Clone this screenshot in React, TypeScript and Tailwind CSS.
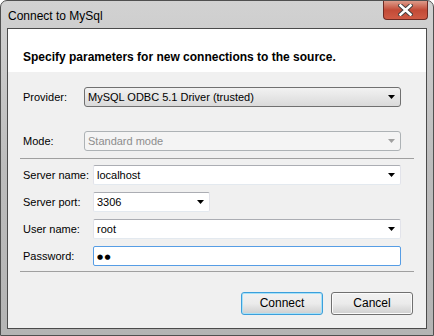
import React from "react";

const Arrow = ({ disabled }: { disabled?: boolean }) => (
  <svg width="7" height="4" viewBox="0 0 7 4" className="shrink-0">
    <polygon points="0,0 7,0 3.5,4" fill={disabled ? "#a0a0a0" : "#000"} />
  </svg>
);

const Combo = ({ text, disabled }: { text: string; disabled?: boolean }) => (
  <div
    className={
      "flex-1 h-[20px] rounded-[3px] border flex items-center pl-[3px] pr-[5px] " +
      (disabled
        ? "border-[#adb2b5] bg-[#f4f4f4] text-[#8d8d8d]"
        : "border-[#707070] bg-gradient-to-b from-[#f2f2f2] to-[#dadada] text-black")
    }
  >
    <span className="flex-1 truncate">{text}</span>
    <Arrow disabled={disabled} />
  </div>
);

const Input = ({
  children,
  arrow,
  focused,
  width,
}: {
  children: React.ReactNode;
  arrow?: boolean;
  focused?: boolean;
  width?: string;
}) => (
  <div
    className={
      "h-[20px] border rounded-[2px] bg-white flex items-center pl-[3px] pr-[5px] " +
      (focused
        ? "border-[#569de5] "
        : "border-t-[#abadb3] border-l-[#e2e3ea] border-r-[#e2e3ea] border-b-[#e3e9ef] ") +
      (width ?? "flex-1")
    }
  >
    <span className="flex-1 truncate">{children}</span>
    {arrow && <Arrow />}
  </div>
);

export default function App() {
  return (
    <div
      className="w-[434px] h-[336px] relative flex flex-col rounded-t-[7px] border border-[#505050] bg-gradient-to-b from-[#d2d2d2] via-[#bcbcbc] to-[#b4b4b4] px-[6px] pb-[6px] text-black"
      style={{ fontFamily: '"Liberation Sans", Arial, sans-serif' }}
    >
      {/* title bar */}
      <div className="h-[27px] flex items-start justify-between">
        <span className="text-[12px] leading-[14px] mt-[8px] ml-[1px] text-black">Connect to MySql</span>
        <div className="w-[45px] h-[19px] -mr-[1px] rounded-b-[4px] border border-t-0 border-[#6e2b24] bg-gradient-to-b from-[#dc9a8a] via-[#c24a37] to-[#cf5b45] flex items-center justify-center">
          <svg width="15" height="12" viewBox="0 0 15 12">
            <path d="M2.5 1.5 L12.5 10.5 M12.5 1.5 L2.5 10.5" stroke="#3c3c3c" strokeWidth="4.4" strokeLinecap="square" />
            <path d="M2.5 1.5 L12.5 10.5 M12.5 1.5 L2.5 10.5" stroke="#ffffff" strokeWidth="2.6" strokeLinecap="square" />
          </svg>
        </div>
      </div>

      {/* client */}
      <div className="flex-1 border border-[#4b4b4b] bg-[#f0f0f0] flex flex-col text-[11px] leading-[13px]">
        <div className="h-[43px] bg-white pl-[15px] pt-[21px]">
          <span className="font-bold text-[12px] leading-[14px]">
            Specify parameters for new connections to the source.
          </span>
        </div>

        <div className="flex flex-col pl-[15px] pr-[25px]">
          <div className="flex items-center mt-[15px]">
            <span className="w-[61px]">Provider:</span>
            <Combo text="MySQL ODBC 5.1 Driver (trusted)" />
          </div>
          <div className="flex items-center mt-[24px]">
            <span className="w-[61px]">Mode:</span>
            <Combo text="Standard mode" disabled />
          </div>
        </div>

        <div className="h-px bg-[#a0a0a0] ml-[12px] mr-[12px] mt-[7px]" />

        <div className="flex flex-col pl-[15px] pr-[25px] gap-[7px] mt-[6px]">
          <div className="flex items-center">
            <span className="w-[70px]">Server name:</span>
            <Input arrow>localhost</Input>
          </div>
          <div className="flex items-center">
            <span className="w-[70px]">Server port:</span>
            <Input arrow width="w-[117px]">3306</Input>
          </div>
          <div className="flex items-center">
            <span className="w-[70px]">User name:</span>
            <Input arrow>root</Input>
          </div>
          <div className="flex items-center">
            <span className="w-[70px]">Password:</span>
            <Input focused>
              <span className="text-[7px] tracking-[1.5px]" style={{ fontFamily: '"DejaVu Sans", sans-serif' }}>●●</span>
            </Input>
          </div>
        </div>

        <div className="h-px bg-[#a0a0a0] ml-[12px] mr-[12px] mt-[5px]" />

        <div className="flex justify-end gap-[8px] pr-[13px] mt-[20px]">
          <button className="w-[82px] h-[23px] rounded-[3px] border border-[#3c9fdb] shadow-[inset_0_0_0_1px_#a6e1f8] bg-gradient-to-b from-[#f2f2f2] via-[#ebebeb] to-[#cfcfcf] text-[12px]">
            Connect
          </button>
          <button className="w-[82px] h-[23px] rounded-[3px] border border-[#707070] shadow-[inset_0_0_0_1px_#fbfbfb] bg-gradient-to-b from-[#f2f2f2] via-[#ebebeb] to-[#cfcfcf] text-[12px]">
            Cancel
          </button>
        </div>
      </div>
    </div>
  );
}
